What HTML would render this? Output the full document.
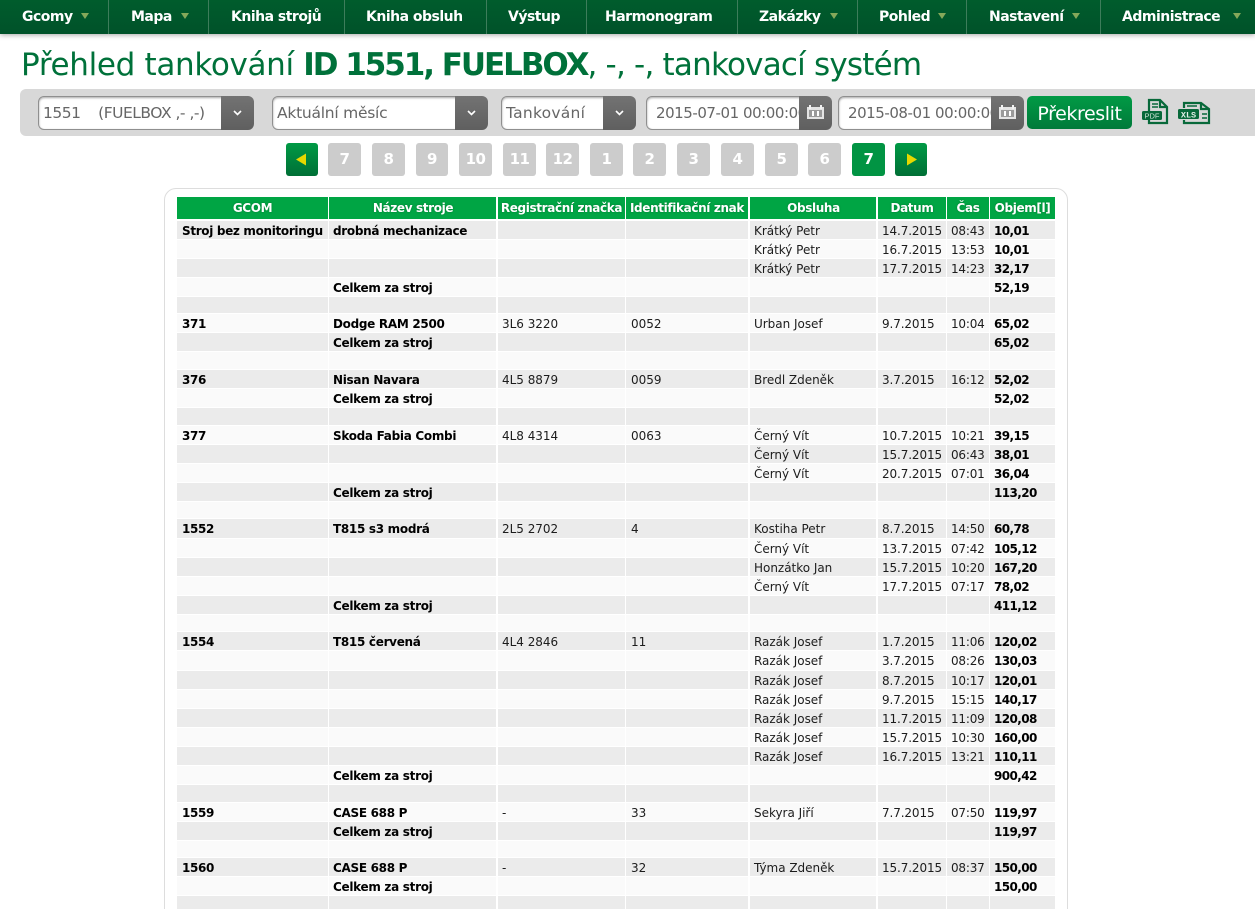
<!DOCTYPE html>
<html lang="cs"><head><meta charset="utf-8"><title>Přehled tankování</title>
<style>
*{box-sizing:border-box}
html,body{margin:0;padding:0;width:1255px;height:909px;overflow:hidden;background:#fff;font-family:"DejaVu Sans","Liberation Sans",sans-serif;color:#111}
#w{position:relative;width:1255px;height:909px;overflow:hidden}
#nav{position:absolute;left:0;top:0;width:1255px;height:34px;background:linear-gradient(#005c2c,#00522a);box-shadow:0 1px 5px rgba(0,0,0,.35)}
#nav i{position:absolute;top:0;width:1px;height:34px;background:#3d7d5b}
#nav b{position:absolute;top:8px;font-size:14px;line-height:18px;color:#fff;white-space:nowrap;letter-spacing:-.5px}
#nav u{position:absolute;top:13px;width:0;height:0;border-left:4px solid transparent;border-right:4px solid transparent;border-top:6px solid #85a85a}
h1{position:absolute;left:21px;top:43px;margin:0;font-size:31px;line-height:44px;font-weight:400;color:#00713a;white-space:nowrap;letter-spacing:-.8px}
h1 .x{letter-spacing:-.33px}
h1 strong{letter-spacing:-2.05px}
#bar{position:absolute;left:20px;top:89px;width:1235px;height:47px;background:#d8d8d8;border-radius:6px 0 0 6px}
.f{position:absolute;top:96px;height:34px;background:#fff;border:1px solid #8f8f8f;border-radius:6px;box-shadow:inset 0 1px 2px rgba(0,0,0,.35);font-size:15.5px;line-height:32px;color:#666;padding-left:4px;white-space:nowrap;overflow:hidden;letter-spacing:-.5px}
.d{position:absolute;top:96px;height:34px;width:33px;background:linear-gradient(#737373,#5f5f5f);border-radius:0 6px 6px 0}
.d svg{position:absolute;left:0;top:0}
#go{position:absolute;left:1027px;top:96px;width:105px;height:33px;border-radius:5px;background:linear-gradient(#019a45,#007a3a);color:#fff;font-size:19px;line-height:36px;text-align:center;letter-spacing:-.4px}
.p{position:absolute;top:143px;width:33px;height:33px;background:#ccc;border-radius:3px;color:#fff;font-weight:700;font-size:15px;line-height:33px;text-align:center;letter-spacing:-.5px}
.p.on{background:#019443}
.p.ar{background:linear-gradient(#009a45,#006f36)}
#card{position:absolute;left:164px;top:188px;width:904px;height:760px;border:1px solid #ddd;border-radius:12px;background:#fff}
#hd{position:absolute;left:177px;top:197px;width:878px;height:22px;background:#00a544}
#hd span{position:absolute;top:0;height:22px;line-height:23px;text-align:center;color:#fff;font-size:12px;font-weight:700;white-space:nowrap;letter-spacing:-.36px;text-shadow:0 0 2px rgba(0,0,0,.25)}
#t{position:absolute;left:177px;top:221px;width:878px}
.r{position:relative;height:19px;border-bottom:1px solid #fff;background:#ebebeb;font-size:12px;line-height:18px;white-space:nowrap;letter-spacing:-.02px;color:#1c1c1c}
.r:nth-child(even){background:#fafafa}
.s17{height:17px}.s18{height:18px}.t20{height:20px}
.r span{position:absolute;top:1px}
.r .a{left:5px;font-weight:700;letter-spacing:-.33px;color:#000}.r .b{left:156px;font-weight:700;letter-spacing:-.3px;color:#000}.r .c{left:325px}.r .d2{left:454px}.r .e{left:577px}.r .f2{left:705px;letter-spacing:-.12px}.r .g{left:774px;letter-spacing:-.2px}.r .h{left:817px;font-weight:700;letter-spacing:-.6px;color:#000}
.v{position:absolute;top:197px;height:712px;background:#fff}
</style></head><body><div id="w">
<div id="nav">
<i style="left:108px"></i><i style="left:208px"></i><i style="left:344px"></i><i style="left:486px"></i><i style="left:586px"></i><i style="left:737px"></i><i style="left:857px"></i><i style="left:966px"></i><i style="left:1100px"></i>
<b style="left:22px">Gcomy</b><u style="left:81px"></u>
<b style="left:131px">Mapa</b><u style="left:181px"></u>
<b style="left:231px">Kniha strojů</b>
<b style="left:366px">Kniha obsluh</b>
<b style="left:508px">Výstup</b>
<b style="left:605px">Harmonogram</b>
<b style="left:759px">Zakázky</b><u style="left:830px"></u>
<b style="left:879px">Pohled</b><u style="left:938px"></u>
<b style="left:989px">Nastavení</b><u style="left:1072px"></u>
<b style="left:1122px">Administrace</b><u style="left:1233px"></u>
</div>
<h1><span class="x">Přehled tankování </span><strong>ID 1551, FUELBOX</strong>, -, -, tankovací systém</h1>
<div id="bar"></div>
<div class="f" style="left:38px;width:190px">1551 &nbsp;&nbsp; (FUELBOX ,- ,-)</div><div class="d" style="left:221px"><svg width="33" height="34"><path d="M13 15l3.500 3.500 3.500-3.500" fill="none" stroke="#fff" stroke-width="1.600"/></svg></div>
<div class="f" style="left:272px;width:190px;letter-spacing:-.25px">Aktuální měsíc</div><div class="d" style="left:455px"><svg width="33" height="34"><path d="M13 15l3.500 3.500 3.500-3.500" fill="none" stroke="#fff" stroke-width="1.600"/></svg></div>
<div class="f" style="left:501px;width:110px;letter-spacing:.25px">Tankování</div><div class="d" style="left:603px"><svg width="33" height="34"><path d="M13 15l3.500 3.500 3.500-3.500" fill="none" stroke="#fff" stroke-width="1.600"/></svg></div>
<div class="f" style="left:646px;width:160px;padding-left:9px;font-size:15px;letter-spacing:-.45px">2015-07-01 00:00:00</div><div class="d" style="left:799px"><svg width="33" height="34"><path d="M8 11h17v12H8z" fill="#e4e4e4"/><path d="M11 9v4M22 9v4" stroke="#f2f2f2" stroke-width="2"/><path d="M10 14h13v7H10z" fill="#9a9a9a"/><path d="M14 15v5M19 15v5" stroke="#fff" stroke-width="2"/></svg></div>
<div class="f" style="left:838px;width:160px;padding-left:9px;font-size:15px;letter-spacing:-.45px">2015-08-01 00:00:00</div><div class="d" style="left:991px"><svg width="33" height="34"><path d="M8 11h17v12H8z" fill="#e4e4e4"/><path d="M11 9v4M22 9v4" stroke="#f2f2f2" stroke-width="2"/><path d="M10 14h13v7H10z" fill="#9a9a9a"/><path d="M14 15v5M19 15v5" stroke="#fff" stroke-width="2"/></svg></div>
<div id="go">Překreslit</div>
<svg style="position:absolute;left:1142px;top:98px" width="28" height="28" viewBox="0 0 28 28"><path d="M7 13V2h11l7 7v16H7v-3" fill="none" stroke="#08693a" stroke-width="2.200"/><path d="M18 2v7h7" fill="none" stroke="#08693a" stroke-width="2.200"/><path d="M10 6h6M10 9h6" stroke="#08693a" stroke-width="1.500"/><rect x="0" y="13" width="20" height="9" rx="1.500" fill="#08693a"/><text x="10" y="20.500" text-anchor="middle" font-size="7.500" font-family="Liberation Sans" fill="#cfe3d6">PDF</text></svg>
<svg style="position:absolute;left:1177px;top:100px" width="34" height="25" viewBox="0 0 34 25"><path d="M7 8V3h17l8 6v14H7v-3" fill="none" stroke="#08693a" stroke-width="2.200"/><path d="M24 3v6h8" fill="none" stroke="#08693a" stroke-width="2.200"/><path d="M10 6h10M25 14h5M25 18h5" stroke="#08693a" stroke-width="1.500"/><rect x="1" y="9" width="21" height="10" rx="1.500" fill="#08693a"/><text x="11.500" y="17.500" text-anchor="middle" font-size="8.500" font-weight="700" font-family="Liberation Mono" fill="#e3efe7">XLS</text></svg>
<div class="p ar" style="left:286px;width:32px"><svg width="32" height="33" style="display:block"><path d="M10 16.500l10-6v12z" fill="#e6d800"/></svg></div>
<div class="p" style="left:328px">7</div><div class="p" style="left:372px">8</div><div class="p" style="left:416px;width:32px">9</div><div class="p" style="left:459px">10</div><div class="p" style="left:503px">11</div><div class="p" style="left:546px">12</div><div class="p" style="left:590px">1</div><div class="p" style="left:633px">2</div><div class="p" style="left:677px">3</div><div class="p" style="left:721px">4</div><div class="p" style="left:765px">5</div><div class="p" style="left:808px">6</div><div class="p on" style="left:852px">7</div>
<div class="p ar" style="left:895px;width:32px"><svg width="32" height="33" style="display:block"><path d="M22 16.500l-10-6v12z" fill="#e6d800"/></svg></div>
<div id="card"></div>
<div id="hd">
<span style="left:0;width:151px">GCOM</span><span style="left:152px;width:168px">Název stroje</span><span style="left:321px;width:127px">Registrační značka</span><span style="left:449px;width:122px">Identifikační znak</span><span style="left:573px;width:127px">Obsluha</span><span style="left:701px;width:68px">Datum</span><span style="left:770px;width:42px">Čas</span><span style="left:813px;width:65px">Objem[l]</span>
</div>
<div id="t">
<div class="r"><span class="a">Stroj bez monitoringu</span><span class="b">drobná mechanizace</span><span class="e">Krátký Petr</span><span class="f2">14.7.2015</span><span class="g">08:43</span><span class="h">10,01</span></div>
<div class="r"><span class="e">Krátký Petr</span><span class="f2">16.7.2015</span><span class="g">13:53</span><span class="h">10,01</span></div>
<div class="r"><span class="e">Krátký Petr</span><span class="f2">17.7.2015</span><span class="g">14:23</span><span class="h">32,17</span></div>
<div class="r"><span class="b">Celkem za stroj</span><span class="h">52,19</span></div>
<div class="r s17"></div>
<div class="r"><span class="a">371</span><span class="b">Dodge RAM 2500</span><span class="c">3L6 3220</span><span class="d2">0052</span><span class="e">Urban Josef</span><span class="f2">9.7.2015</span><span class="g">10:04</span><span class="h">65,02</span></div>
<div class="r"><span class="b">Celkem za stroj</span><span class="h">65,02</span></div>
<div class="r s18"></div>
<div class="r"><span class="a">376</span><span class="b">Nisan Navara</span><span class="c">4L5 8879</span><span class="d2">0059</span><span class="e">Bredl Zdeněk</span><span class="f2">3.7.2015</span><span class="g">16:12</span><span class="h">52,02</span></div>
<div class="r"><span class="b">Celkem za stroj</span><span class="h">52,02</span></div>
<div class="r s18"></div>
<div class="r"><span class="a">377</span><span class="b">Skoda Fabia Combi</span><span class="c">4L8 4314</span><span class="d2">0063</span><span class="e">Černý Vít</span><span class="f2">10.7.2015</span><span class="g">10:21</span><span class="h">39,15</span></div>
<div class="r"><span class="e">Černý Vít</span><span class="f2">15.7.2015</span><span class="g">06:43</span><span class="h">38,01</span></div>
<div class="r"><span class="e">Černý Vít</span><span class="f2">20.7.2015</span><span class="g">07:01</span><span class="h">36,04</span></div>
<div class="r"><span class="b">Celkem za stroj</span><span class="h">113,20</span></div>
<div class="r s17"></div>
<div class="r t20"><span class="a">1552</span><span class="b">T815 s3 modrá</span><span class="c">2L5 2702</span><span class="d2">4</span><span class="e">Kostiha Petr</span><span class="f2">8.7.2015</span><span class="g">14:50</span><span class="h">60,78</span></div>
<div class="r"><span class="e">Černý Vít</span><span class="f2">13.7.2015</span><span class="g">07:42</span><span class="h">105,12</span></div>
<div class="r"><span class="e">Honzátko Jan</span><span class="f2">15.7.2015</span><span class="g">10:20</span><span class="h">167,20</span></div>
<div class="r"><span class="e">Černý Vít</span><span class="f2">17.7.2015</span><span class="g">07:17</span><span class="h">78,02</span></div>
<div class="r"><span class="b">Celkem za stroj</span><span class="h">411,12</span></div>
<div class="r s17"></div>
<div class="r"><span class="a">1554</span><span class="b">T815 červená</span><span class="c">4L4 2846</span><span class="d2">11</span><span class="e">Razák Josef</span><span class="f2">1.7.2015</span><span class="g">11:06</span><span class="h">120,02</span></div>
<div class="r t20"><span class="e">Razák Josef</span><span class="f2">3.7.2015</span><span class="g">08:26</span><span class="h">130,03</span></div>
<div class="r"><span class="e">Razák Josef</span><span class="f2">8.7.2015</span><span class="g">10:17</span><span class="h">120,01</span></div>
<div class="r"><span class="e">Razák Josef</span><span class="f2">9.7.2015</span><span class="g">15:15</span><span class="h">140,17</span></div>
<div class="r"><span class="e">Razák Josef</span><span class="f2">11.7.2015</span><span class="g">11:09</span><span class="h">120,08</span></div>
<div class="r"><span class="e">Razák Josef</span><span class="f2">15.7.2015</span><span class="g">10:30</span><span class="h">160,00</span></div>
<div class="r"><span class="e">Razák Josef</span><span class="f2">16.7.2015</span><span class="g">13:21</span><span class="h">110,11</span></div>
<div class="r"><span class="b">Celkem za stroj</span><span class="h">900,42</span></div>
<div class="r s18"></div>
<div class="r"><span class="a">1559</span><span class="b">CASE 688 P</span><span class="c">-</span><span class="d2">33</span><span class="e">Sekyra Jiří</span><span class="f2">7.7.2015</span><span class="g">07:50</span><span class="h">119,97</span></div>
<div class="r"><span class="b">Celkem za stroj</span><span class="h">119,97</span></div>
<div class="r s17"></div>
<div class="r"><span class="a">1560</span><span class="b">CASE 688 P</span><span class="c">-</span><span class="d2">32</span><span class="e">Týma Zdeněk</span><span class="f2">15.7.2015</span><span class="g">08:37</span><span class="h">150,00</span></div>
<div class="r"><span class="b">Celkem za stroj</span><span class="h">150,00</span></div>
<div class="r s17"></div>
</div>
<div class="v" style="left:328px;width:1px"></div><div class="v" style="left:496px;width:2px"></div><div class="v" style="left:625px;width:1px"></div><div class="v" style="left:748px;width:2px"></div><div class="v" style="left:876px;width:2px"></div><div class="v" style="left:946px;width:1px"></div><div class="v" style="left:989px;width:1px"></div>
</div></body></html>
